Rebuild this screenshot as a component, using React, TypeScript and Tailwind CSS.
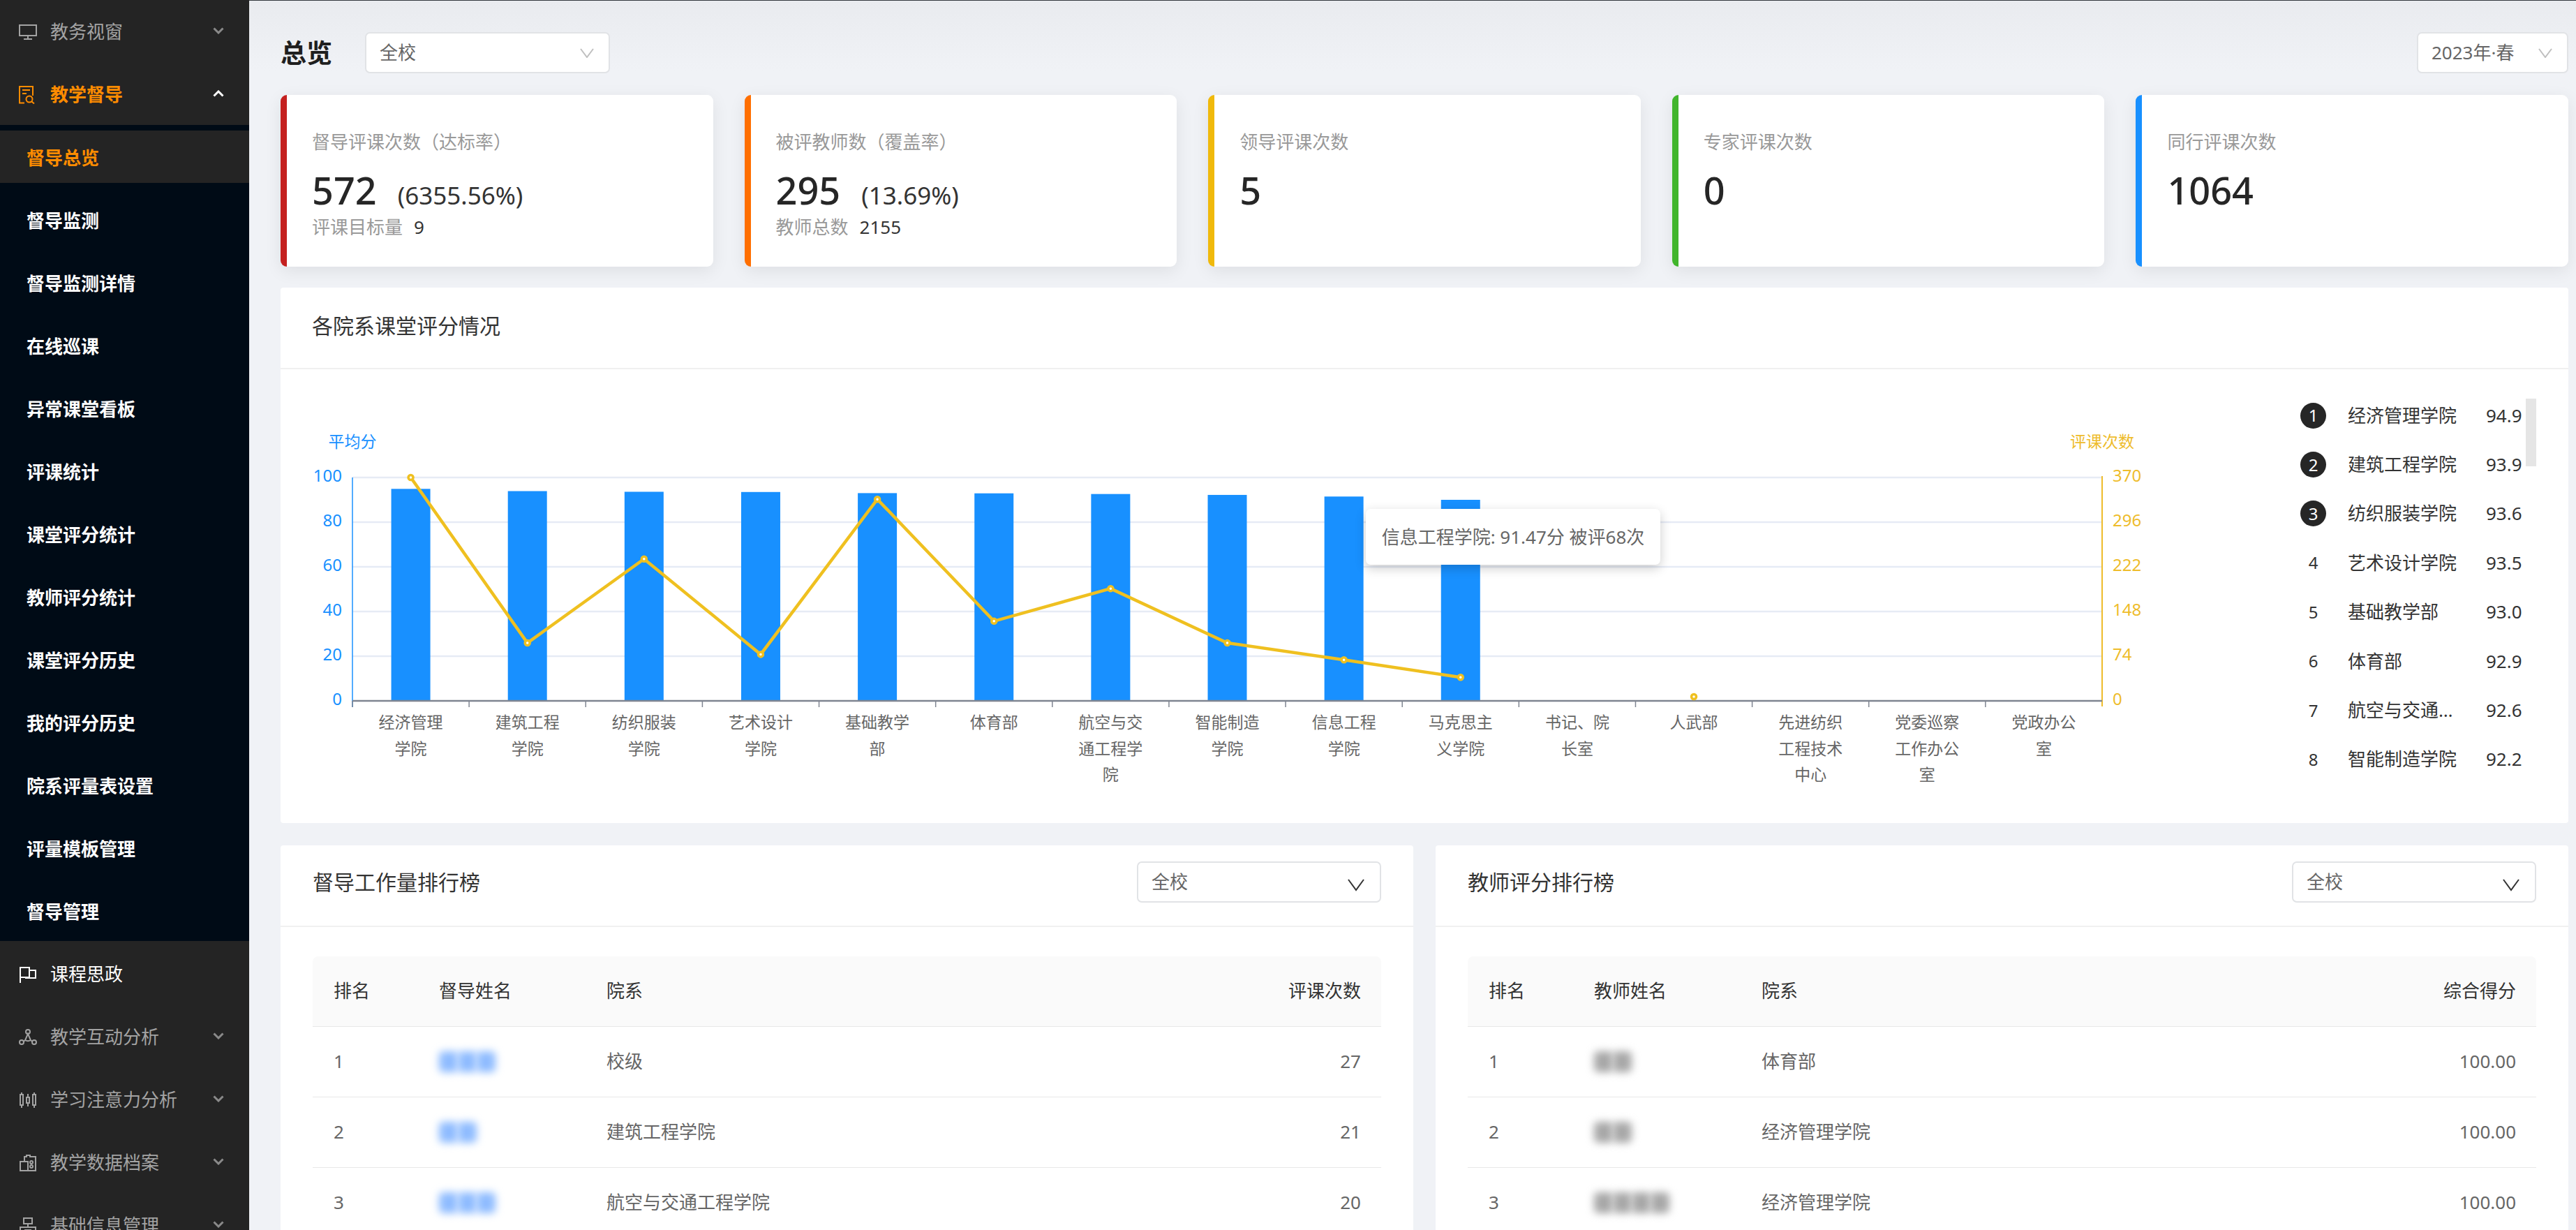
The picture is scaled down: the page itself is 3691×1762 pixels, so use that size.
import type { ReactNode } from 'react'

const subMenu = ['督导总览', '督导监测', '督导监测详情', '在线巡课', '异常课堂看板', '评课统计', '课堂评分统计', '教师评分统计', '课堂评分历史', '我的评分历史', '院系评量表设置', '评量模板管理', '督导管理']

const cards = [
  { title: '督导评课次数（达标率）', value: '572', rate: '(6355.56%)', subLabel: '评课目标量', subValue: '9', bar: 'border-l-[#c4201f]' },
  { title: '被评教师数（覆盖率）', value: '295', rate: '(13.69%)', subLabel: '教师总数', subValue: '2155', bar: 'border-l-[#ff6f00]' },
  { title: '领导评课次数', value: '5', bar: 'border-l-[#f0b90b]' },
  { title: '专家评课次数', value: '0', bar: 'border-l-[#41b52c]' },
  { title: '同行评课次数', value: '1064', bar: 'border-l-[#1890ff]' },
]

const departments = [
  { lines: ['经济管理', '学院'], score: 94.9, count: 370 },
  { lines: ['建筑工程', '学院'], score: 93.9, count: 96 },
  { lines: ['纺织服装', '学院'], score: 93.6, count: 235 },
  { lines: ['艺术设计', '学院'], score: 93.5, count: 77 },
  { lines: ['基础教学', '部'], score: 93.0, count: 334 },
  { lines: ['体育部'], score: 92.9, count: 132 },
  { lines: ['航空与交', '通工程学', '院'], score: 92.6, count: 186 },
  { lines: ['智能制造', '学院'], score: 92.2, count: 96 },
  { lines: ['信息工程', '学院'], score: 91.47, count: 68 },
  { lines: ['马克思主', '义学院'], score: 90, count: 39 },
  { lines: ['书记、院', '长室'], score: 0, count: 0 },
  { lines: ['人武部'], score: 0, count: 7 },
  { lines: ['先进纺织', '工程技术', '中心'], score: 0, count: 0 },
  { lines: ['党委巡察', '工作办公', '室'], score: 0, count: 0 },
  { lines: ['党政办公', '室'], score: 0, count: 0 },
]

const ranking = [
  ['经济管理学院', '94.9'],
  ['建筑工程学院', '93.9'],
  ['纺织服装学院', '93.6'],
  ['艺术设计学院', '93.5'],
  ['基础教学部', '93.0'],
  ['体育部', '92.9'],
  ['航空与交通工程学院', '92.6'],
  ['智能制造学院', '92.2'],
]

const supervisors = [
  { blur: 3, dept: '校级', value: '27' },
  { blur: 2, dept: '建筑工程学院', value: '21' },
  { blur: 3, dept: '航空与交通工程学院', value: '20' },
]

const teachers = [
  { blur: 2, dept: '体育部', value: '100.00' },
  { blur: 2, dept: '经济管理学院', value: '100.00' },
  { blur: 4, dept: '经济管理学院', value: '100.00' },
]

function Chevron({ up, className }: { up?: boolean; className?: string }) {
  return (
    <svg width="16" height="10" viewBox="0 0 16 10" fill="none" stroke="currentColor" strokeWidth="3" className={className}>
      <path d={up ? 'M1.5 8.5L8 2l6.5 6.5' : 'M1.5 1.5L8 8l6.5-6.5'} />
    </svg>
  )
}

function Icon({ children, w = 26, h = 24 }: { children: ReactNode; w?: number; h?: number }) {
  return (
    <svg width={w} height={h} viewBox={`0 0 ${w} ${h}`} fill="none" stroke="currentColor" strokeWidth="2">
      {children}
    </svg>
  )
}

function NavItem({ icon, label, color, chevron, bold }: { icon: ReactNode; label: string; color: string; chevron?: 'up' | 'down'; bold?: boolean }) {
  return (
    <div className={`flex h-[75px] shrink-0 items-center pl-[27px] pr-[36px] text-[26px] ${color} ${bold ? 'font-bold' : ''}`}>
      <span className="flex w-[45px] shrink-0 items-center justify-start">{icon}</span>
      <span>{label}</span>
      {chevron && (
        <Chevron
          up={chevron === 'up'}
          className={`ml-auto -translate-y-[2px] ${chevron === 'up' ? 'text-white' : 'text-[#8a8a8a]'}`}
        />
      )}
    </div>
  )
}

function Sidebar() {
  return (
    <aside className="flex h-full w-[357px] shrink-0 flex-col overflow-hidden bg-[#242424]">
      <div className="mt-[8px]">
        <NavItem
          label="教务视窗"
          color="text-[#a3a3a3]"
          chevron="down"
          icon={
            <Icon h={22}>
              <rect x="1" y="1" width="24" height="15" />
              <path d="M13 16v4M7 21h12" />
            </Icon>
          }
        />
      </div>
      <div className="mt-[15px]">
        <NavItem
          label="教学督导"
          color="text-[#ff8c00]"
          bold
          chevron="up"
          icon={
            <Icon w={23} h={26}>
              <path d="M8 24.5H1V1h19v13" />
              <path d="M5 6h11M5 11h6" />
              <circle cx="15" cy="19" r="4.5" />
              <path d="M18.5 22.5l3.5 3" />
            </Icon>
          }
        />
      </div>
      <div className="mt-[6px] flex flex-col gap-[15px] bg-[#000b16] pb-[6px] pt-[8px]">
        {subMenu.map((label, i) => (
          <div
            key={label}
            className={`flex h-[75px] shrink-0 items-center pl-[38px] pt-[3px] text-[26px] font-bold ${i === 0 ? 'bg-[#242424] text-[#ff8c00]' : 'text-white'}`}
          >
            {label}
          </div>
        ))}
      </div>
      <div className="mt-[10px] flex flex-col gap-[15px]">
        <NavItem
          label="课程思政"
          color="text-white"
          icon={
            <Icon h={24}>
              <path d="M2 24V1M2 2h13v14H2M15 6h9v11H10v-1" />
            </Icon>
          }
        />
        <NavItem
          label="教学互动分析"
          color="text-[#a3a3a3]"
          chevron="down"
          icon={
            <Icon h={24}>
              <circle cx="13" cy="4" r="3" />
              <circle cx="4" cy="19" r="3" />
              <circle cx="22" cy="19" r="3" />
              <path d="M13 7l-4 9q4 2.500 8 0zM6.500 18l3-2M19.500 18l-3-2" />
            </Icon>
          }
        />
        <NavItem
          label="学习注意力分析"
          color="text-[#a3a3a3]"
          chevron="down"
          icon={
            <Icon h={24}>
              <rect x="2" y="4" width="4" height="15" />
              <rect x="11" y="8" width="4" height="8" />
              <rect x="20" y="4" width="4" height="15" />
              <path d="M4 1v3M4 19v4M13 3v5M13 16v5M22 1v3M22 19v4" />
            </Icon>
          }
        />
        <NavItem
          label="教学数据档案"
          color="text-[#a3a3a3]"
          chevron="down"
          icon={
            <Icon h={24}>
              <path d="M8 10V3h3V1h5v2h8v20H2V10h11v13" />
              <circle cx="18" cy="11" r="2" />
              <circle cx="18" cy="17" r="2" />
            </Icon>
          }
        />
        <NavItem
          label="基础信息管理"
          color="text-[#a3a3a3]"
          chevron="down"
          icon={
            <Icon h={24}>
              <rect x="7" y="1" width="12" height="8" />
              <path d="M13 9v5M2 23v-9h22v9M9 23v-5h8v5" />
            </Icon>
          }
        />
      </div>
    </aside>
  )
}

function SelectBox({ label, className, dark }: { label: string; className: string; dark?: boolean }) {
  return (
    <div className={`flex h-[59px] shrink-0 items-center justify-between rounded-[7px] border-2 border-[#e1e3e6] bg-white pl-[19px] text-[26px] text-[#666] ${className}`}>
      <span>{label}</span>
      {dark ? (
        <svg width="24" height="18" viewBox="0 0 24 18" fill="none" stroke="#333" strokeWidth="2" className="mr-[22px] translate-y-[4px]">
          <path d="M1 1l11 15L23 1" />
        </svg>
      ) : (
        <svg width="20" height="14" viewBox="0 0 20 14" fill="none" stroke="#bfbfbf" strokeWidth="2" className="mr-[21px]">
          <path d="M1 1l9 12 9-12" />
        </svg>
      )}
    </div>
  )
}

function StatCard({ card }: { card: (typeof cards)[number] }) {
  return (
    <div className={`h-[246px] rounded-[9px] border-l-[9px] bg-white pl-[36px] pt-[49px] shadow-[0_6px_24px_rgba(0,0,0,0.08)] ${card.bar}`}>
      <div className="text-[26px] leading-[36px] text-[#999]">{card.title}</div>
      <div className="mt-[19px] flex h-[64px] items-baseline text-[#262626]">
        <span className="text-[54px] font-medium leading-[64px]">{card.value}</span>
        {card.rate && <span className="ml-[30px] text-[35px] text-[#333]">{card.rate}</span>}
      </div>
      {card.subLabel && (
        <div className="mt-[3px] flex text-[26px] leading-[36px]">
          <span className="text-[#999]">{card.subLabel}</span>
          <span className="ml-[16px] text-[#333]">{card.subValue}</span>
        </div>
      )}
    </div>
  )
}

const AXIS_LEFT = 505
const AXIS_RIGHT = 3012
const AXIS_TOP = 684
const AXIS_BOTTOM = 1004
const BAR_WIDTH = 56
const STEP = (AXIS_RIGHT - AXIS_LEFT) / departments.length

const centerX = (i: number) => AXIS_LEFT + STEP * (i + 0.5)
const scoreY = (score: number) => AXIS_BOTTOM - ((AXIS_BOTTOM - AXIS_TOP) * score) / 100
const countY = (count: number) => AXIS_BOTTOM - ((AXIS_BOTTOM - AXIS_TOP) * count) / 370

function Chart() {
  const leftTicks = [100, 80, 60, 40, 20, 0]
  const rightTicks = [370, 296, 222, 148, 74, 0]
  const linePoints = departments.slice(0, 10).map((d, i) => `${centerX(i)},${countY(d.count)}`).join(' ')

  return (
    <svg width="2890" height="650" viewBox="402 529 2890 650" className="block shrink-0">
      <text x={AXIS_LEFT} y="632" textAnchor="middle" dominantBaseline="central" fontSize="23" fill="#1890ff">平均分</text>
      <text x={AXIS_RIGHT} y="632" textAnchor="middle" dominantBaseline="central" fontSize="23" fill="#eebc2c">评课次数</text>

      {leftTicks.map((t, i) => {
        const y = AXIS_TOP + i * 64
        return (
          <g key={t}>
            {t !== 0 && <line x1={AXIS_LEFT} x2={AXIS_RIGHT} y1={y} y2={y} stroke="#e6ebf5" strokeWidth="2.5" />}
            <text x="490" y={y - 4} textAnchor="end" dominantBaseline="central" fontSize="24" fill="#1890ff">{t}</text>
            <text x="3027" y={y - 4} dominantBaseline="central" fontSize="24" fill="#eebc2c">{rightTicks[i]}</text>
          </g>
        )
      })}

      {departments.map((d, i) =>
        d.score > 0 ? (
          <rect key={d.lines.join('')} x={centerX(i) - BAR_WIDTH / 2} y={scoreY(d.score)} width={BAR_WIDTH} height={AXIS_BOTTOM - scoreY(d.score)} fill="#1890ff" />
        ) : null,
      )}

      <line x1={AXIS_LEFT} x2={AXIS_LEFT} y1={AXIS_TOP} y2={1013} stroke="#1890ff" strokeWidth="1.5" />
      <line x1={AXIS_RIGHT} x2={AXIS_RIGHT} y1={AXIS_TOP - 2} y2={1012} stroke="#eebc2c" strokeWidth="2" />
      <line x1={AXIS_LEFT} x2={AXIS_RIGHT} y1={AXIS_BOTTOM} y2={AXIS_BOTTOM} stroke="#7f8591" strokeWidth="2.5" />
      {departments.map((d, i) => (
        <line key={d.lines.join('')} x1={AXIS_LEFT + STEP * i} x2={AXIS_LEFT + STEP * i} y1={AXIS_BOTTOM} y2={1013} stroke="#7f8591" strokeWidth="1.5" />
      ))}

      {departments.map((d, i) => (
        <text key={d.lines.join('')} textAnchor="middle" fontSize="23" fill="#666">
          {d.lines.map((line, j) => (
            <tspan key={line} x={centerX(i)} y={1034 + j * 37.5} dominantBaseline="central">{line}</tspan>
          ))}
        </text>
      ))}

      <polyline points={linePoints} fill="none" stroke="#efc020" strokeWidth="4.5" />
      {departments.map((d, i) =>
        i < 10 || d.count > 0 ? (
          <circle key={d.lines.join('')} cx={centerX(i)} cy={countY(d.count)} r="3.5" fill="#fff" stroke="#efc020" strokeWidth="3.5" />
        ) : null,
      )}
    </svg>
  )
}

function RankingList() {
  return (
    <div className="relative flex-1 pt-[31px]">
      {ranking.map(([name, score], i) => (
        <div key={name} className="flex h-[70.4px] items-center text-[26px] text-[#333]">
          <span className={`flex h-[37px] w-[37px] shrink-0 items-center justify-center rounded-full text-[24px] ${i < 3 ? 'bg-[#262626] text-white' : ''}`}>
            {i + 1}
          </span>
          <span className="ml-[31px] w-[160px] truncate">{name}</span>
          <span className="ml-[38px]">{score}</span>
        </div>
      ))}
      <div className="absolute left-[323px] top-[42px] h-[97px] w-[15px] bg-[#e5e5e5]" />
    </div>
  )
}

function Blurred({ count, className }: { count: number; className: string }) {
  return (
    <div className="flex h-[26px] items-center">
      {Array.from({ length: count }, (_, i) => (
        <span key={i} className={`h-[30px] w-[27px] rounded-[6px] blur-[6px] ${className}`} />
      ))}
    </div>
  )
}

function RankPanel({ title, nameHead, valueHead, rows, blurClass }: {
  title: string
  nameHead: string
  valueHead: string
  rows: { blur: number; dept: string; value: string }[]
  blurClass: string
}) {
  return (
    <section className="rounded-[4px] bg-white">
      <div className="flex h-[117px] items-center justify-between border-b-2 border-[#f0f0f0] px-[46px] pb-[10px]">
        <h2 className="text-[30px] font-normal text-[#333]">{title}</h2>
        <SelectBox label="全校" dark className="w-[350px]" />
      </div>
      <div className="px-[46px] pt-[42px]">
        <table className="w-full table-fixed border-collapse text-left text-[26px]">
          <thead>
            <tr className="h-[100px] border-b border-[#e8e8e8] bg-[#fafafa] text-[#333]">
              <th className="w-[181px] rounded-tl-[8px] pl-[30px] font-normal">排名</th>
              <th className="w-[240px] font-normal">{nameHead}</th>
              <th className="font-normal">院系</th>
              <th className="w-[180px] rounded-tr-[8px] pr-[29px] text-right font-normal">{valueHead}</th>
            </tr>
          </thead>
          <tbody className="text-[#666]">
            {rows.map((row, i) => (
              <tr key={i} className="h-[101px] border-b border-[#e8e8e8]">
                <td className="pl-[30px]">{i + 1}</td>
                <td><Blurred count={row.blur} className={blurClass} /></td>
                <td>{row.dept}</td>
                <td className="pr-[29px] text-right">{row.value}</td>
              </tr>
            ))}
          </tbody>
        </table>
      </div>
    </section>
  )
}

export default function App() {
  return (
    <div className="flex h-[1762px] w-[3691px] overflow-hidden font-['Noto_Sans','Noto_Sans_CJK_SC',sans-serif]">
      <Sidebar />
      <main className="min-w-0 flex-1 border-t border-[#33373d] bg-[linear-gradient(#e9ebef,#f0f2f6_100px)] pl-[45px] pr-[11px] pt-[45px]">
        <div className="flex items-center">
          <h1 className="w-[121px] text-[37px] font-bold text-[#1f1f1f]">总览</h1>
          <SelectBox label="全校" className="w-[351px]" />
          <SelectBox label="2023年·春" className="ml-auto w-[217px]" />
        </div>

        <div className="mt-[31px] grid grid-cols-5 gap-[45px]">
          {cards.map((card) => (
            <StatCard key={card.title} card={card} />
          ))}
        </div>

        <section className="mt-[30px] rounded-[4px] bg-white">
          <div className="flex h-[117px] items-center border-b-2 border-[#f0f0f0] pb-[6px] pl-[45px] text-[30px] text-[#333]">
            各院系课堂评分情况
          </div>
          <div className="relative flex h-[650px]">
            <Chart />
            <div className="w-[4px] shrink-0" />
            <RankingList />
            <div className="absolute left-[1555px] top-[200px] flex h-[80px] w-[422px] items-center justify-center rounded-[7px] bg-white text-[26px] text-[#666] shadow-[0_5px_16px_rgba(0,0,0,0.2)]">
              信息工程学院: 91.47分 被评68次
            </div>
          </div>
        </section>

        <div className="mt-[32px] grid grid-cols-2 gap-[32px]">
          <RankPanel title="督导工作量排行榜" nameHead="督导姓名" valueHead="评课次数" rows={supervisors} blurClass="bg-[#8fbcff]" />
          <RankPanel title="教师评分排行榜" nameHead="教师姓名" valueHead="综合得分" rows={teachers} blurClass="bg-[#a8a8a8]" />
        </div>
      </main>
    </div>
  )
}
